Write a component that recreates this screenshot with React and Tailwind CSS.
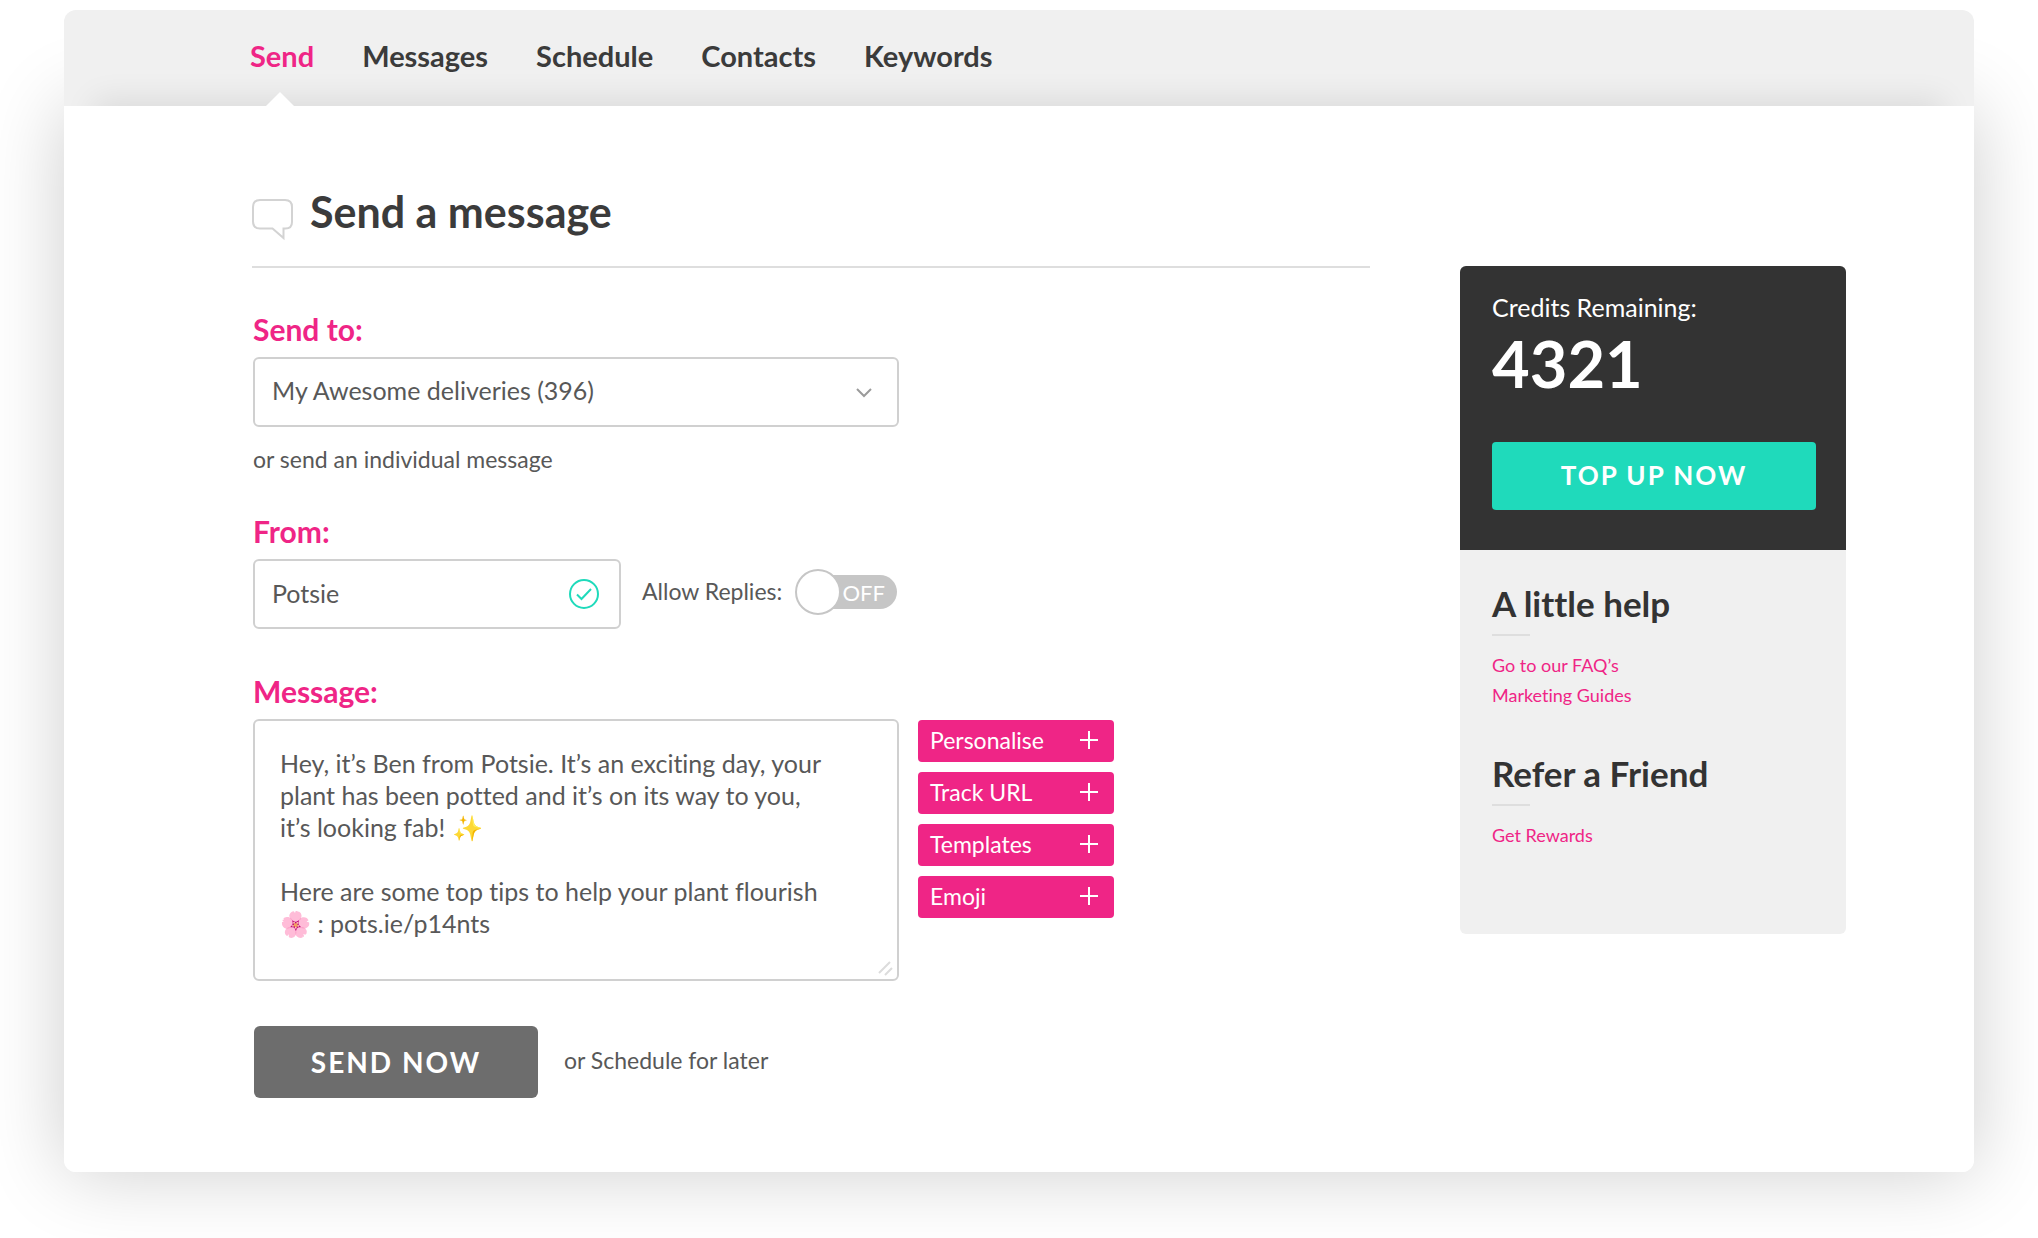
import React, { useState } from 'react';
import { clsx } from 'clsx';

const NAV_ITEMS = ['Send', 'Messages', 'Schedule', 'Contacts', 'Keywords'];
const TOOLS = ['Personalise', 'Track URL', 'Templates', 'Emoji'];

const DEFAULT_MESSAGE = `Hey, it’s Ben from Potsie. It’s an exciting day, your
plant has been potted and it’s on its way to you,
it’s looking fab! ✨

Here are some top tips to help your plant flourish
🌸 : pots.ie/p14nts`;

const SpeechIcon = () => (
  <svg width="42" height="43" viewBox="0 0 42 43" fill="none" stroke="#d3d3d3" strokeWidth="2" aria-hidden="true">
    <path d="M8 1h25q7 0 7 7v15q0 6.500-6.500 6.500h-2v9.500l-11-9.500H8q-7 0-7-7V8q0-7 7-7z" />
  </svg>
);

const ChevronIcon = () => (
  <svg width="18" height="12" viewBox="0 0 18 12" fill="none" stroke="#9b9b9b" strokeWidth="2" aria-hidden="true">
    <path d="M2 2l7 7 7-7" />
  </svg>
);

const CheckIcon = () => (
  <svg width="30" height="30" viewBox="0 0 30 30" fill="none" stroke="#1fdabb" strokeWidth="2" aria-hidden="true">
    <circle cx="15" cy="15" r="14" />
    <path d="M8 15.500l4.500 4.500L22 10" />
  </svg>
);

const PlusIcon = () => (
  <svg width="18" height="18" viewBox="0 0 18 18" stroke="#fff" strokeWidth="2" aria-hidden="true">
    <path d="M9 0v18M0 9h18" />
  </svg>
);

const GripIcon = () => (
  <svg width="16" height="16" viewBox="0 0 16 16" stroke="#dcdcdc" strokeWidth="2" aria-hidden="true">
    <path d="M1 13L12 2M7 15l7-7" />
  </svg>
);

const Header = ({ active, onChange }) => (
  <header className="relative rounded-t-xl bg-[#f0f0f0] pl-[186px]">
    <nav className="flex h-24 gap-12">
      {NAV_ITEMS.map((item) => (
        <a
          key={item}
          href="#"
          onClick={() => onChange(item)}
          className={clsx(
            'relative z-10 pt-6 text-[29px] leading-[44px] font-bold',
            item === active ? 'text-[#ef2586]' : 'text-[#3b3b3b]'
          )}
        >
          {item}
          {item === active && (
            <svg className="absolute bottom-0 left-4" width="28" height="14" viewBox="0 0 28 14" fill="#fff" aria-hidden="true">
              <path d="M0 14L14 0l14 14z" />
            </svg>
          )}
        </a>
      ))}
    </nav>
  </header>
);

const Label = ({ htmlFor, children }) => (
  <label htmlFor={htmlFor} className="mb-2 block text-[30px] leading-10 font-bold text-[#ef2586]">
    {children}
  </label>
);

const Toggle = ({ checked, onChange }) => (
  <span className="relative flex h-[46px] w-[102px] items-center">
    <input
      id="replies"
      type="checkbox"
      role="switch"
      checked={checked}
      onChange={onChange}
      className="absolute inset-0 z-10 cursor-pointer opacity-0"
    />
    <span className="ml-5 flex h-[34px] flex-1 items-center justify-end rounded-r-full bg-[#c6c6c6] pr-3 text-[22px] text-white">
      {checked ? 'ON' : 'OFF'}
    </span>
    <span className="absolute top-0 left-0 size-[46px] rounded-full border-2 border-[#c6c6c6] bg-white" />
  </span>
);

const MessageForm = () => {
  const [from, setFrom] = useState('Potsie');
  const [replies, setReplies] = useState(false);
  const [message, setMessage] = useState(DEFAULT_MESSAGE);

  return (
    <form className="pl-px" onSubmit={(e) => e.preventDefault()}>
      {/* Recipients */}
      <Label htmlFor="send-to">Send to:</Label>
      <div className="relative w-[646px]">
        <select
          id="send-to"
          className="block h-[70px] w-full appearance-none rounded-md border-2 border-[#d0d0d0] bg-white px-[17px] pb-0.5 text-[25px] text-[#585858]"
        >
          <option>My Awesome deliveries (396)</option>
        </select>
        <span className="pointer-events-none absolute top-[30px] right-[26px]">
          <ChevronIcon />
        </span>
      </div>
      <a href="#" className="mt-4 inline-block text-[23px] leading-8 text-[#585858]">
        or send an individual message
      </a>

      {/* Sender */}
      <div className="mt-9">
        <Label htmlFor="from">From:</Label>
      </div>
      <div className="flex items-center">
        <div className="relative w-[368px]">
          <input
            id="from"
            type="text"
            value={from}
            onChange={(e) => setFrom(e.target.value)}
            className="block h-[70px] w-full rounded-md border-2 border-[#d0d0d0] px-[17px] pb-0.5 text-[25px] text-[#585858]"
          />
          <span className="pointer-events-none absolute top-5 right-[22px]">
            <CheckIcon />
          </span>
        </div>
        <div className="flex items-center pb-1 pl-[21px]">
          <label htmlFor="replies" className="w-[153px] pb-0.5 text-[23px] text-[#585858]">
            Allow Replies:
          </label>
          <Toggle checked={replies} onChange={() => setReplies(!replies)} />
        </div>
      </div>

      {/* Message */}
      <div className="mt-[42px]">
        <Label htmlFor="message">Message:</Label>
      </div>
      <div className="flex items-start gap-[19px]">
        <div className="relative w-[646px]">
          <textarea
            id="message"
            value={message}
            onChange={(e) => setMessage(e.target.value)}
            className="block h-[262px] w-full resize-none rounded-md border-2 border-[#d0d0d0] px-[25px] pt-[26px] text-[25px] leading-8 text-[#585858]"
          />
          <span className="pointer-events-none absolute right-[5px] bottom-[5px]">
            <GripIcon />
          </span>
        </div>
        <div className="flex w-[196px] flex-col gap-[10px] pt-px">
          {TOOLS.map((tool) => (
            <button
              key={tool}
              type="button"
              className="flex h-[42px] items-center justify-between rounded bg-[#ef2586] pr-4 pb-0.5 pl-3 text-[23px] text-white"
            >
              {tool}
              <PlusIcon />
            </button>
          ))}
        </div>
      </div>

      <div className="mt-[45px] flex items-center gap-[26px] pl-px">
        <button
          type="submit"
          className="h-[72px] w-[284px] rounded-md bg-[#6d6d6d] text-[28px] font-bold tracking-[2px] text-white"
        >
          SEND NOW
        </button>
        <a href="#" className="pb-1 text-[23px] text-[#585858]">or Schedule for later</a>
      </div>
    </form>
  );
};

const HelpBlock = ({ title, links }) => (
  <section>
    <h2 className="text-[35px] leading-[38px] font-bold text-[#333]">{title}</h2>
    <hr className="mt-3 mb-[14px] w-[38px] border-t-2 border-[#dedede]" />
    {links.map((link) => (
      <a key={link} href="#" className="block text-[18px] leading-[30px] text-[#ef2586]">
        {link}
      </a>
    ))}
  </section>
);

const Sidebar = () => (
  <aside className="mt-40 w-[386px] shrink-0 self-start overflow-hidden rounded-md bg-[#f0f0f0]">
    <div className="bg-[#333] px-8 pt-6 pb-10 text-white">
      <p className="text-[25px] leading-[34px]">Credits Remaining:</p>
      <p className="text-[65px] leading-[78px] font-bold">4321</p>
      <button type="button" className="mt-10 h-[68px] w-[324px] rounded bg-[#1fdabb] pb-0.5 text-[26px] font-bold tracking-[2px]">
        TOP UP NOW
      </button>
    </div>
    <div className="flex flex-col gap-11 px-8 pt-[34px] pb-[84px]">
      <HelpBlock title="A little help" links={['Go to our FAQ’s', 'Marketing Guides']} />
      <HelpBlock title="Refer a Friend" links={['Get Rewards']} />
    </div>
  </aside>
);

const App = () => {
  const [active, setActive] = useState('Send');

  return (
    <div className="min-h-screen overflow-hidden bg-white px-16 pt-[10px] pb-[66px] font-[Lato,'Liberation_Sans',sans-serif] [font-variant-ligatures:none]">
      <Header active={active} onChange={setActive} />
      {/* Wide shadow stays under the header, the soft one on <main> falls across it */}
      <div className="rounded-b-xl shadow-[0_0_80px_rgba(0,0,0,0.2)]">
        <main className="relative flex justify-between gap-[90px] rounded-b-xl bg-white pr-32 pb-[74px] pl-[188px] shadow-[0_-36px_30px_-30px_rgba(0,0,0,0.09)]">
          <div className="max-w-[1118px] flex-1 pt-[76px]">
            <div className="flex items-end gap-4">
              <SpeechIcon />
              <h1 className="text-[43px] leading-[60px] font-bold text-[#3b3b3b]">Send a message</h1>
            </div>
            <hr className="mt-6 mb-[41px] border-t-2 border-[#dedede]" />
            <MessageForm />
          </div>
          <Sidebar />
        </main>
      </div>
    </div>
  );
};

export default App;
